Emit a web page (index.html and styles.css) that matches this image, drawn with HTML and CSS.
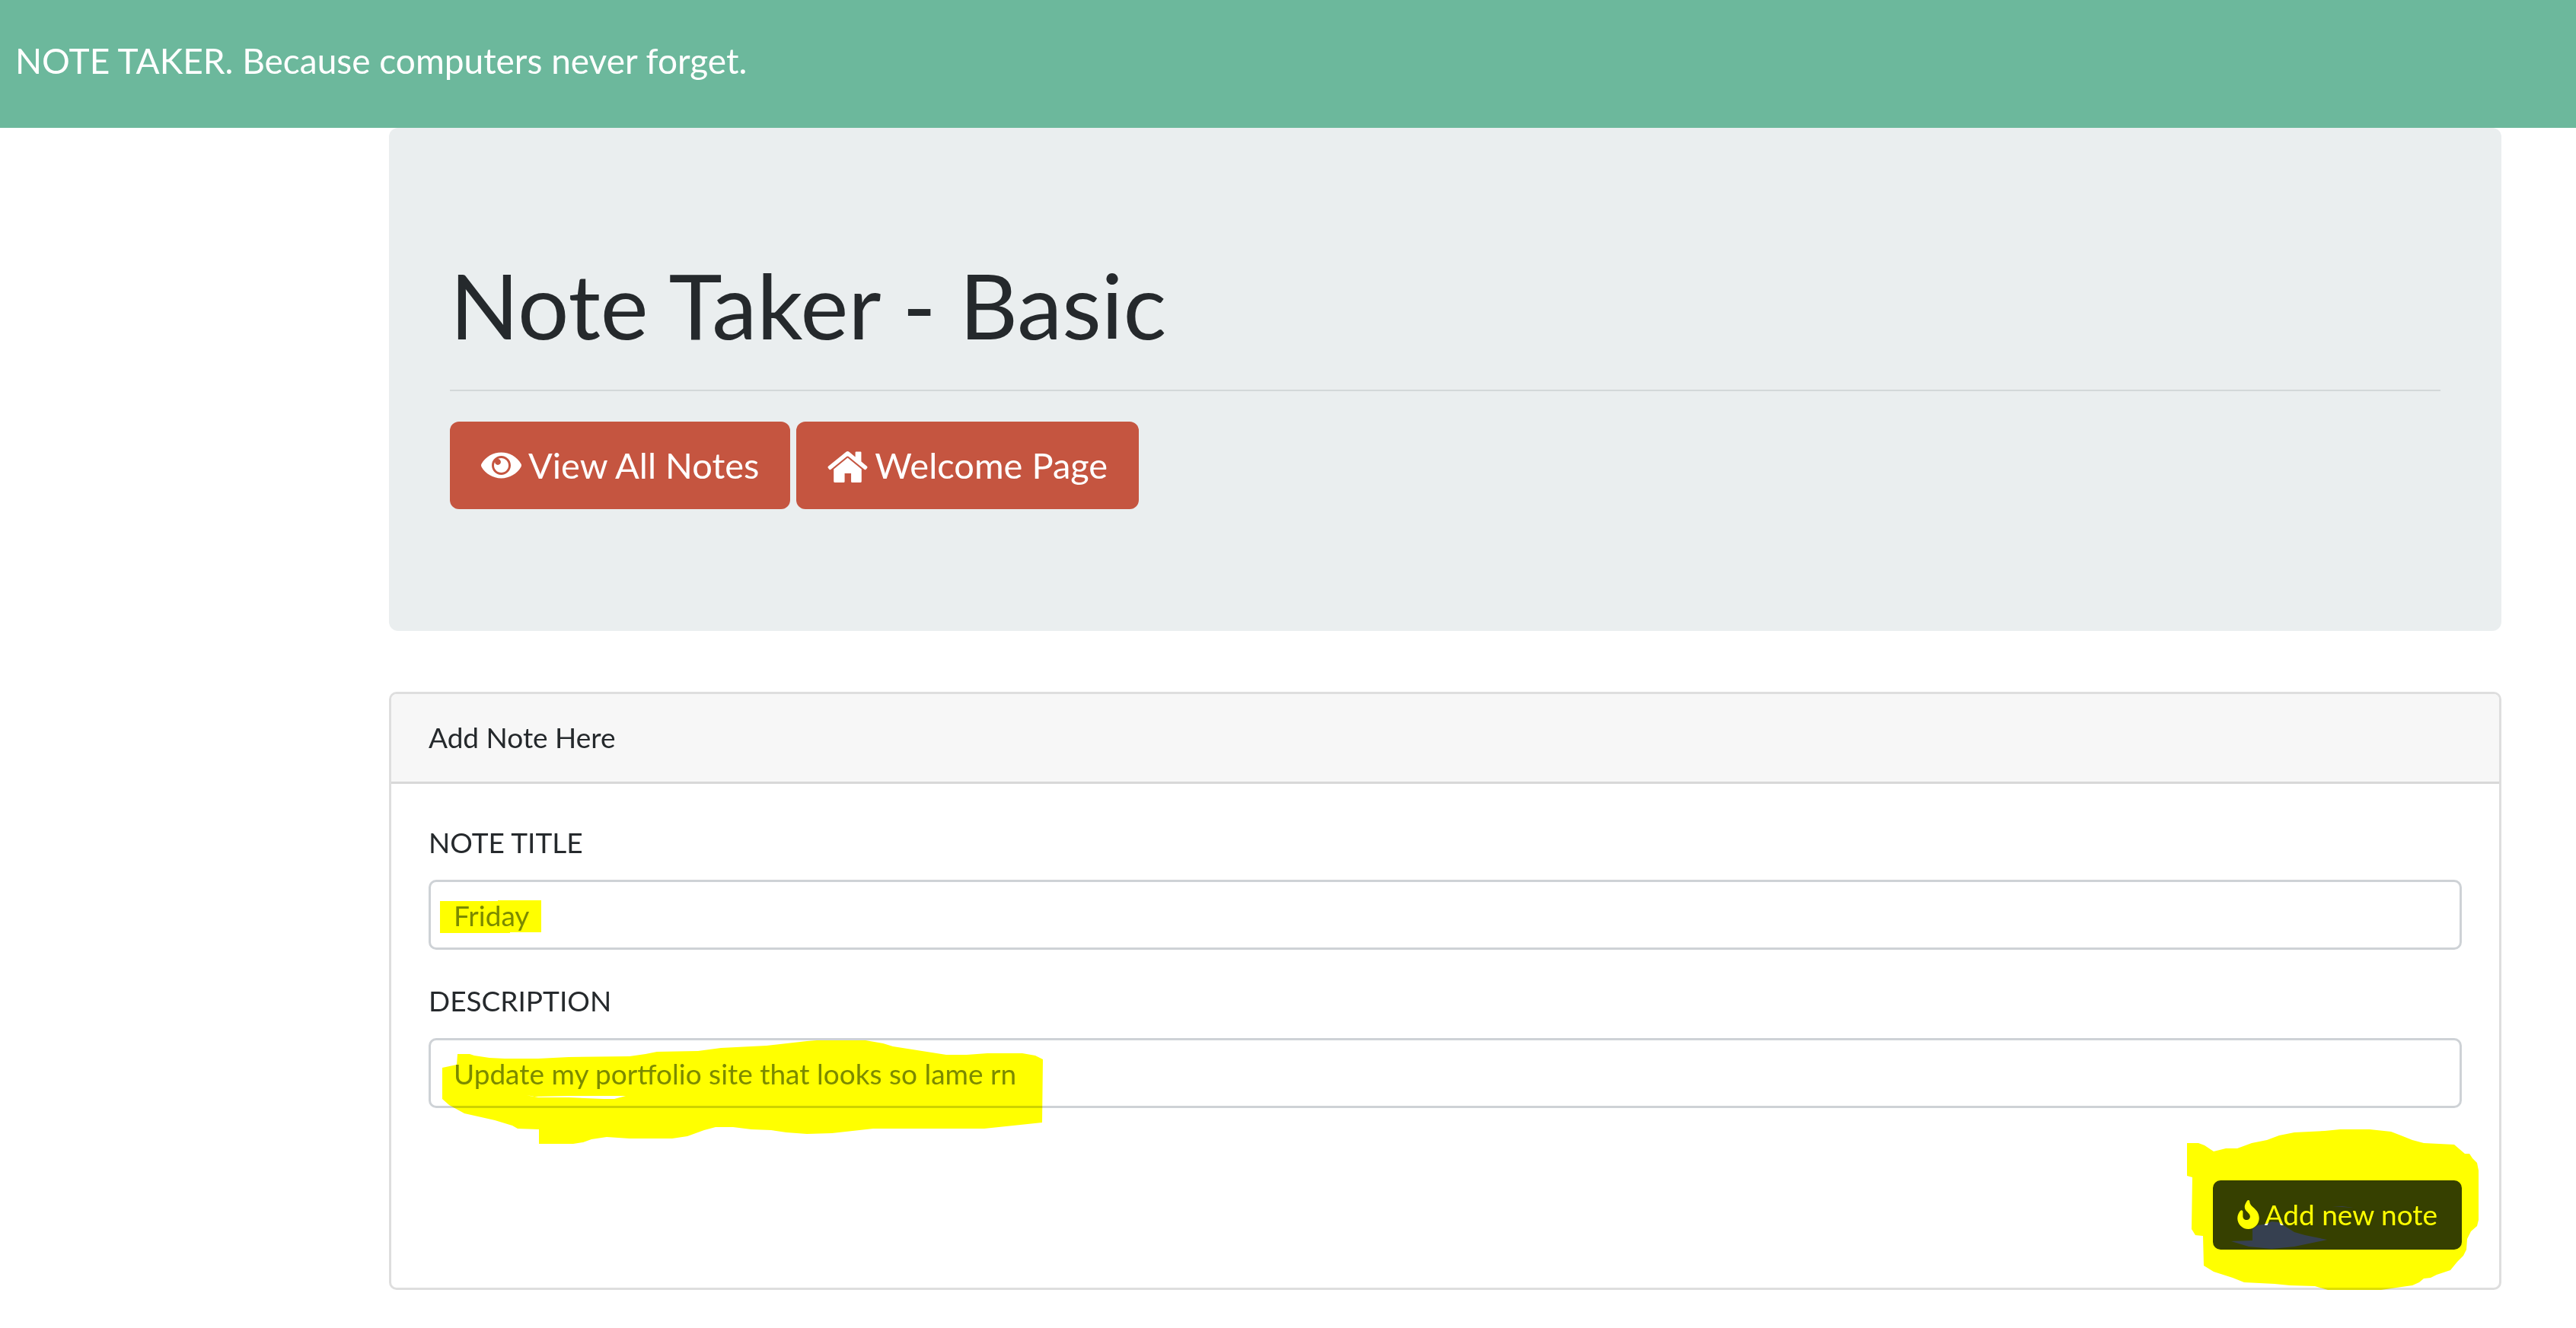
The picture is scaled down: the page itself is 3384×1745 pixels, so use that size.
FILE: index.html
```html
<!DOCTYPE html>
<html lang="en">
<head>
<meta charset="utf-8">
<title>Note Taker</title>
<link rel="stylesheet" href="styles.css">
</head>
<body>
<header class="navbar"><a class="brand" href="#">NOTE TAKER. Because computers never forget.</a></header>
<main class="container">
  <section class="jumbotron">
    <h1 class="title">Note Taker - Basic</h1>
    <hr class="rule">
    <nav class="actions">
      <a class="btn btn-large" href="#notes">
        <svg class="icon-large" viewBox="0 0 576 512" aria-hidden="true"><path d="M569.354 231.631C512.969 135.949 407.81 72 288 72 168.14 72 63.004 135.994 6.646 231.631a47.999 47.999 0 0 0 0 48.739C63.031 376.051 168.19 440 288 440c119.86 0 224.996-63.994 281.354-159.631a47.997 47.997 0 0 0 0-48.738zM288 392c-75.162 0-136-60.827-136-136 0-75.162 60.826-136 136-136 75.162 0 136 60.826 136 136 0 75.162-60.826 136-136 136zm104-136c0 57.438-46.562 104-104 104s-104-46.562-104-104c0-17.708 4.431-34.379 12.236-48.973l-.001.032c0 23.651 19.173 42.823 42.824 42.823s42.824-19.173 42.824-42.823c0-23.651-19.173-42.824-42.824-42.824l-.032.001C253.621 156.431 270.292 152 288 152c57.438 0 104 46.562 104 104z"/></svg>
        <span>View All Notes</span>
      </a>
      <a class="btn btn-large" href="#home">
        <svg class="icon-large" viewBox="0 0 162 144" aria-hidden="true"><path d="M3 76L74 18Q81 12 88 18L112 38V20Q112 17 115 17H133Q136 17 136 20V57L159 76Q162 79 160 82L155 88Q152 91 149 89L84 36Q81 34 78 36L13 89Q10 91 7 88L2 82Q0 79 3 76Z"/><path d="M81 41L137 87V136Q137 141 132 141H99Q95 141 95 137V104H69V137Q69 141 65 141H30Q25 141 25 136V87Z"/></svg>
        <span>Welcome Page</span>
      </a>
    </nav>
  </section>
  <section class="card">
    <div class="card-header">Add Note Here</div>
    <form class="card-body">
      <div class="field">
        <label class="label" for="note-title">NOTE TITLE</label>
        <div class="marked">
          <input class="control" id="note-title" type="text" value="Friday">
          <svg class="marker" aria-hidden="true"><path d="M15 28H91V27H148V69H107V70H15Z"/></svg>
        </div>
      </div>
      <div class="field">
        <label class="label" for="note-text">DESCRIPTION</label>
        <div class="marked">
          <input class="control" id="note-text" type="text" value="Update my portfolio site that looks so lame rn">
          <svg class="marker" aria-hidden="true"><path fill-rule="evenodd" d="M18 39L37 35L38 21H54L60 23L80 26L100 27H144L184 25L264 24L285 21L300 18L354 17L384 13L444 10L497 4L510 3H574L597 7L610 11L680 22L707 22L734 20H780L797 23L807 28L806 111L730 119H584L557 122L530 125L497 126L470 124L450 121L424 120L400 117H377L362 121L340 129L320 132H264L234 130L214 133L203 137L190 139H145V120L117 119L110 115L87 108L47 99L27 88L18 80ZM129 75L137 77L187 76H259L244 80H230L184 78H144Z"/></svg>
        </div>
      </div>
      <div class="submit">
        <div class="marked">
          <button class="btn btn-dark" type="submit">
            <svg class="icon-flame" viewBox="0 0 384 512" aria-hidden="true"><path d="M216 23.86c0-23.8-30.65-32.77-44.15-13.04C48 191.85 224 200 224 288c0 35.63-29.11 64.46-64.85 63.99-35.17-.45-63.15-29.77-63.15-64.94v-85.51c0-21.7-26.47-32.23-41.43-16.5C27.8 213.16 0 261.33 0 320c0 105.87 86.13 192 192 192s192-86.13 192-192c0-170.29-168-193-168-296.14z"/></svg>
            <span>Add new note</span>
          </button>
          <svg class="marker" aria-hidden="true"><path fill-rule="evenodd" d="M-34 -49H-19L-11 -46L1 -38L17 -42H32L51 -49L71 -53L87 -59L107 -63L147 -65L167 -67H206L234 -64L247 -59L262 -53L277 -49L317 -47L331 -35H337L341 -29L347 -23L349 -13V52L347 60L339 67L334 77L333 91L329 99L321 107L312 118L294 124L286 128L277 129L271 134L262 138L241 141L221 144H151L134 139L101 138L81 136L41 134L26 128L1 120L-12 112L-13 73L-23 72L-28 64L-27 -4L-34 -6ZM52 64L59 59L71 57L77 54L86 55L96 61L107 68L121 72L150 78L107 87L77 90L47 87L24 80L52 79ZM157 35L170 34L184 36L170 35Z"/></svg>
        </div>
      </div>
    </form>
  </section>
</main>
</body>
</html>
```
FILE: styles.css
```css
* {
  box-sizing: border-box;
}

body {
  margin: 0;
  background: #fff;
  color: #25292c;
  font: 37px/54px Lato, sans-serif;
}

.navbar {
  padding: 45px 20px 53px;
  background: #6cb89c;
}

.brand {
  display: block;
  color: #fff;
  font-size: 46px;
  line-height: 70px;
  text-decoration: none;
}

.container {
  padding: 0 98px 50px 511px;
}

.jumbotron {
  margin-bottom: 80px;
  padding: 160px 80px;
  border-radius: 12px;
  background: #eaeeef;
}

.title {
  margin: 0;
  font-size: 119px;
  font-weight: 400;
  line-height: 144px;
}

.rule {
  height: 2px;
  margin: 40px 0;
  border: 0;
  background: #d3d8d9;
}

.actions {
  display: flex;
  gap: 8px;
}

.btn {
  display: flex;
  align-items: center;
  border: 0;
  color: #fff;
  font-family: inherit;
  text-decoration: none;
  white-space: nowrap;
}

.btn svg {
  fill: currentColor;
}

.btn-large {
  gap: 9px;
  padding: 22px 41px;
  border-radius: 12px;
  background: #c55540;
  font-size: 47px;
  line-height: 71px;
}

.icon-large {
  width: 53px;
  height: 47px;
}

.card {
  border: 3px solid #dedede;
  border-radius: 10px;
}

.card-header {
  padding: 30px 49px 31px;
  border-bottom: 3px solid #d8d8d8;
  border-radius: 7px 7px 0 0;
  background: #f7f7f7;
}

.card-body {
  padding: 50px 49px;
}

.field {
  margin-bottom: 40px;
}

.label {
  display: block;
  margin-bottom: 22px;
}

.marked {
  position: relative;
}

.control {
  display: block;
  width: 100%;
  height: 92px;
  padding: 0 30px;
  border: 3px solid #ced2d6;
  border-radius: 10px;
  background: #fff;
  color: #7b8a8b;
  font: inherit;
}

.marker {
  position: absolute;
  top: 0;
  left: 0;
  width: 100%;
  height: 100%;
  overflow: visible;
  fill: #ff0;
  mix-blend-mode: multiply;
  pointer-events: none;
}

.submit {
  display: flex;
  justify-content: flex-end;
  padding-top: 55px;
}

.btn-dark {
  gap: 7px;
  height: 91px;
  padding: 0 32px 2px;
  border-radius: 10px;
  background: #364050;
  font-size: 37px;
}

.icon-flame {
  width: 29px;
  height: 38px;
}
```
